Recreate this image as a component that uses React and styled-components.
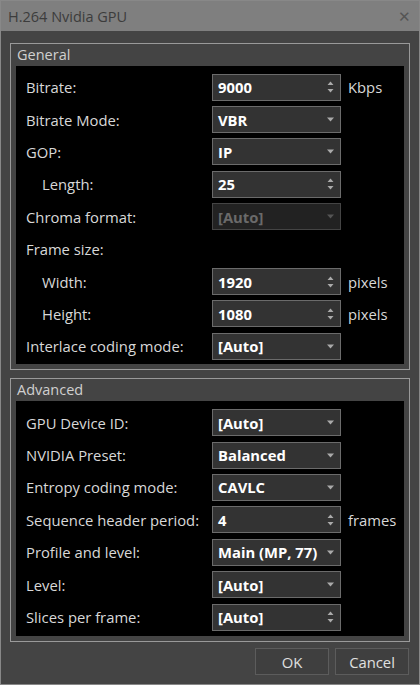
import styled, { createGlobalStyle } from "styled-components";

const Global = createGlobalStyle`
  html, body { margin: 0; padding: 0; background: #444; }
  body { font-family: "Open Sans", "Noto Sans", sans-serif; }
`;

const Win = styled.div`
  width: 420px; height: 685px; box-sizing: border-box;
  background: #444444; border: 1px solid #888;
  display: flex; flex-direction: column;
`;
const Title = styled.div`
  height: 30px; background: #7f7f7f; color: #3c3c3c;
  display: flex; align-items: center; justify-content: space-between;
  padding: 0 8px 0 7px; font-size: 14.5px;
`;
const Close = styled.span` font-size: 15px; color: #555; `;
const Body = styled.div`
  padding: 12px 9px 0 9px; display: flex; flex-direction: column; gap: 8px;
`;
const Group = styled.div`
  border: 1px solid #9a9a9a; padding: 0 5px 5px 5px;
`;
const Legend = styled.div`
  color: #d0d0d0; font-size: 14.5px; height: 22px; line-height: 22px; padding-left: 1px;
`;
const Panel = styled.div`
  background: #000; padding: ${(p) => p.$pad}; display: flex; flex-direction: column;
`;
const Row = styled.div`
  height: 32.4px; display: flex; align-items: center;
`;
const Label = styled.div`
  width: ${(p) => (p.$indent ? 170 : 186)}px; padding-left: ${(p) => (p.$indent ? 26 : 10)}px;
  color: #d8d8d8; font-size: 14.8px; white-space: nowrap;
`;
const Field = styled.div`
  width: 129px; height: 27px; box-sizing: border-box;
  border: 1px solid ${(p) => (p.$disabled ? "#444" : "#6b6b6b")};
  background: ${(p) => (p.$disabled ? "#222" : "#333")};
  color: ${(p) => (p.$disabled ? "#6a6a6a" : "#fff")};
  font-weight: 700; font-size: 14.8px; display: flex; align-items: center;
  justify-content: space-between; padding: 0 6px 0 5px;
`;
const Unit = styled.div` color: #d8d8d8; font-size: 14.8px; margin-left: 7px; `;
const Buttons = styled.div`
  display: flex; justify-content: flex-end; gap: 6px; padding: 6px 10px 0 0;
`;
const Button = styled.div`
  width: 74px; height: 27px; box-sizing: border-box; border: 1px solid #5c5c5c;
  background: #3f3f3f; color: #e0e0e0; font-size: 14.8px;
  display: flex; align-items: center; justify-content: center;
`;

const Spin = () => (
  <svg width="7" height="14" viewBox="0 0 7 14">
    <path d="M0.5 5 L3.5 1.5 L6.5 5Z M0.5 9 L3.5 12.5 L6.5 9Z" fill="#aaa" />
  </svg>
);
const Drop = ({ dim }) => (
  <svg width="7" height="5" viewBox="0 0 7 5">
    <path d="M0 0.5 L7 0.5 L3.5 4.5Z" fill={dim ? "#555" : "#aaa"} />
  </svg>
);

function Line({ label, value, type, unit, indent, disabled }) {
  return (
    <Row>
      <Label $indent={indent}>{label}</Label>
      {value !== undefined && (
        <Field $disabled={disabled}>
          <span>{value}</span>
          {type === "spin" ? <Spin /> : <Drop dim={disabled} />}
        </Field>
      )}
      {unit && <Unit>{unit}</Unit>}
    </Row>
  );
}

export default function App() {
  return (
    <Win>
      <Global />
      <Title>
        <span>H.264 Nvidia GPU</span>
        <Close>✕</Close>
      </Title>
      <Body>
        <Group>
          <Legend>General</Legend>
          <Panel $pad="5px 0 1px 0">
            <Line label="Bitrate:" value="9000" type="spin" unit="Kbps" />
            <Line label="Bitrate Mode:" value="VBR" />
            <Line label="GOP:" value="IP" />
            <Line label="Length:" value="25" type="spin" indent />
            <Line label="Chroma format:" value="[Auto]" disabled />
            <Line label="Frame size:" />
            <Line label="Width:" value="1920" type="spin" unit="pixels" indent />
            <Line label="Height:" value="1080" type="spin" unit="pixels" indent />
            <Line label="Interlace coding mode:" value="[Auto]" />
          </Panel>
        </Group>
        <Group>
          <Legend>Advanced</Legend>
          <Panel $pad="6px 0 3px 0">
            <Line label="GPU Device ID:" value="[Auto]" />
            <Line label="NVIDIA Preset:" value="Balanced" />
            <Line label="Entropy coding mode:" value="CAVLC" />
            <Line label="Sequence header period:" value="4" type="spin" unit="frames" />
            <Line label="Profile and level:" value="Main (MP, 77)" />
            <Line label="Level:" value="[Auto]" />
            <Line label="Slices per frame:" value="[Auto]" type="spin" />
          </Panel>
        </Group>
      </Body>
      <Buttons>
        <Button>OK</Button>
        <Button>Cancel</Button>
      </Buttons>
    </Win>
  );
}
